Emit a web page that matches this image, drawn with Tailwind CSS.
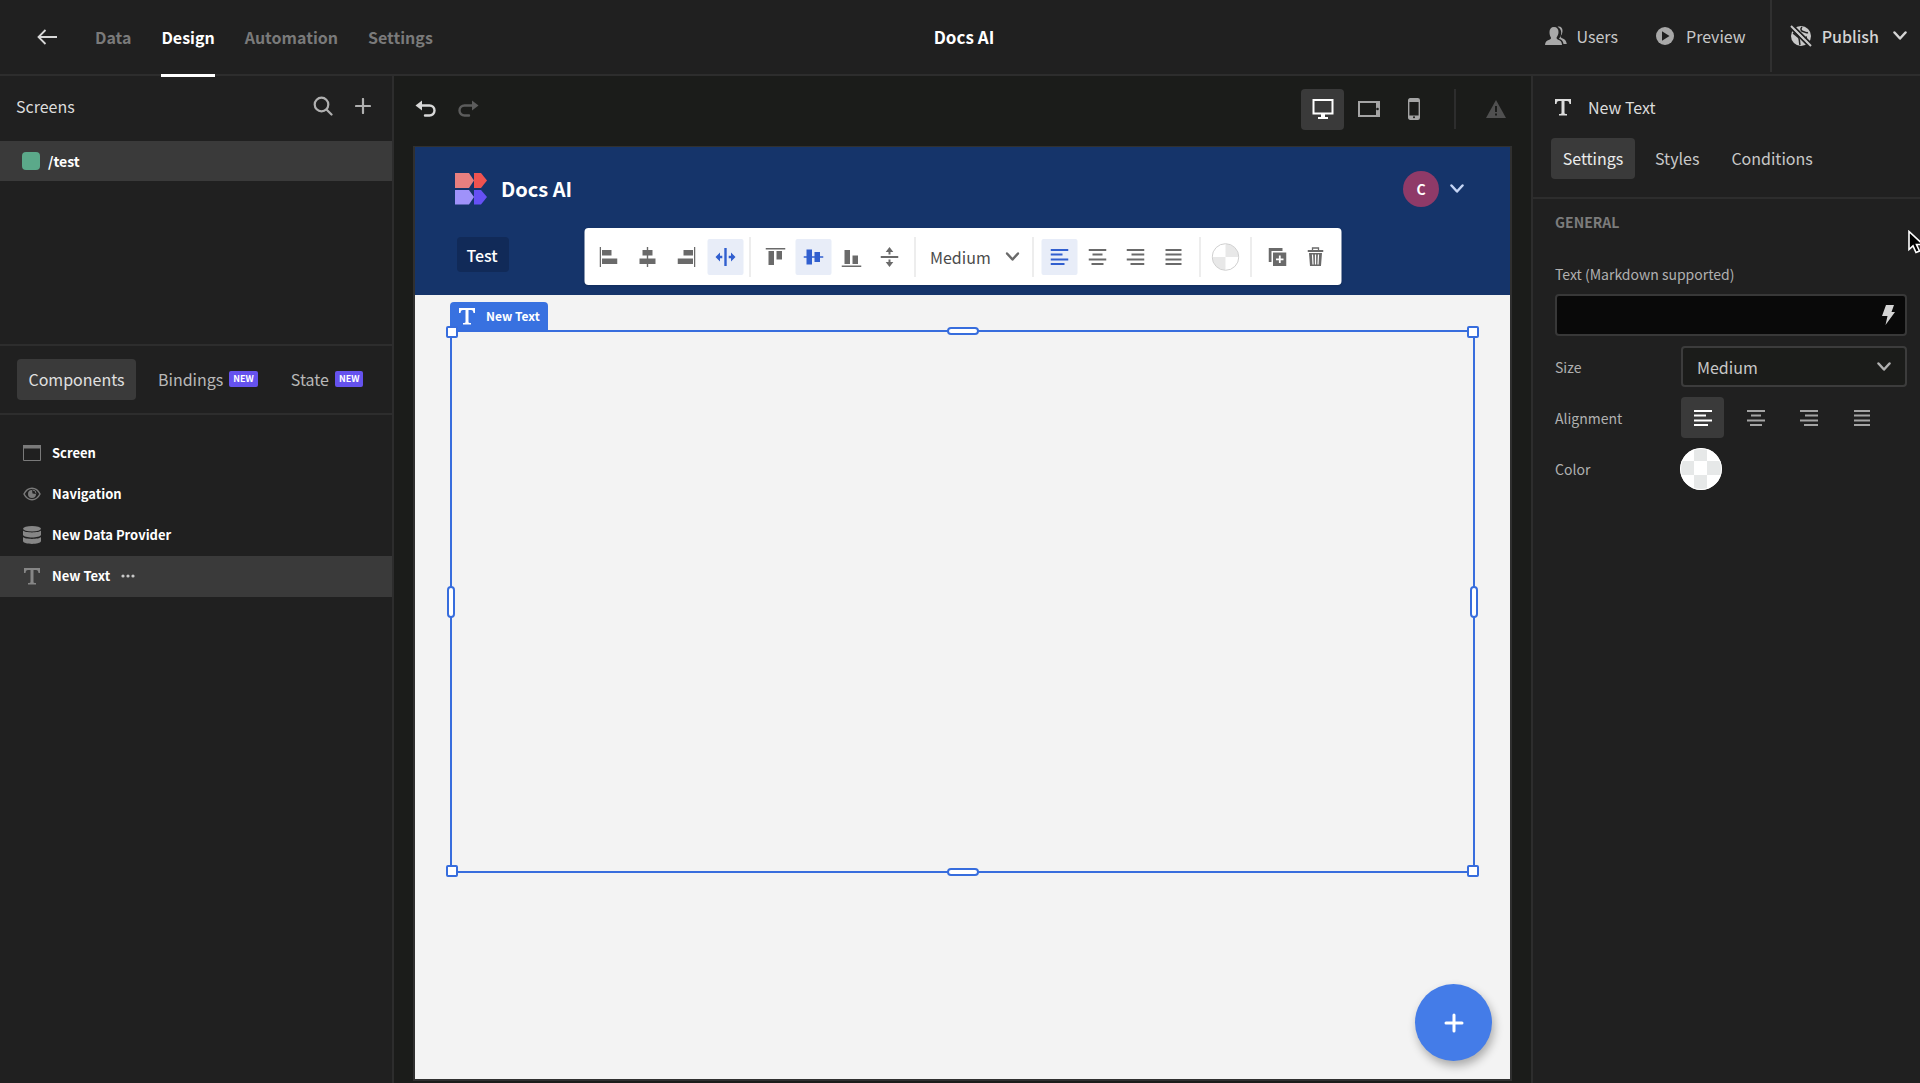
<!DOCTYPE html>
<html lang="en">
<head>
<meta charset="utf-8">
<meta name="viewport" content="width=device-width, initial-scale=1">
<title>Docs AI</title>
<script src="https://cdn.jsdelivr.net/npm/@tailwindcss/browser@4"></script>
</head>
<body class="flex min-h-screen flex-col overflow-x-hidden bg-[#202020] font-['Noto_Sans_CJK_SC','Noto_Sans',sans-serif] text-base leading-6 text-[#c8c8c8]">

<svg class="hidden" aria-hidden="true">
  <symbol id="chevron" viewBox="0 0 14 10"><path d="M1.5 1.5 7 7.5l5.500-6" fill="none" stroke="currentColor" stroke-width="2.500" stroke-linecap="round" stroke-linejoin="round"/></symbol>
  <symbol id="type" viewBox="0 0 18 18"><path d="M1 1h16v5h-1.500c-.2-2-.8-3-2.500-3h-2.500v12c0 .8.7 1 2.500 1v1.500h-8V16c1.800 0 2.500-.2 2.500-1V3H5C3.300 3 2.700 4 2.500 6H1z" fill="currentColor"/></symbol>
  <symbol id="undo" viewBox="0 0 22 18"><path d="M5 5.500h9.500a5 5 0 0 1 0 10H10" fill="none" stroke="currentColor" stroke-width="2.400" stroke-linecap="round"/><path d="M.5 5.500 7 .5v10z" fill="currentColor"/></symbol>
  <symbol id="al-left" viewBox="0 0 18 18"><path d="M0 2h18M0 6.500h12M0 11.500h18M0 16h14" stroke="currentColor" stroke-width="2.200"/></symbol>
  <symbol id="al-center" viewBox="0 0 18 18"><path d="M0 2h18M4 6.500h10M0 11.500h18M3 16h12" stroke="currentColor" stroke-width="2.200"/></symbol>
  <symbol id="al-right" viewBox="0 0 18 18"><path d="M0 2h18M5 6.500h13M0 11.500h18M4 16h14" stroke="currentColor" stroke-width="2.200"/></symbol>
  <symbol id="al-just" viewBox="0 0 18 18"><path d="M1 2h16M1 6.500h16M1 11.500h16M1 16h16" stroke="currentColor" stroke-width="2.200"/></symbol>
</svg>

<header class="grid h-[76px] shrink-0 grid-cols-[1fr_auto_1fr] items-center border-b-2 border-[#2d2d2d] pl-5 pr-3">
  <nav class="flex h-[74px] items-center gap-[30px] font-bold text-[#7a7a7a]">
    <button aria-label="Back" class="ml-[17px] mr-2 text-[#d8d8d8]">
      <svg class="h-4 w-5" viewBox="0 0 20 16"><path d="M20 8H2M8.500 1 1.500 8l7 7" fill="none" stroke="currentColor" stroke-width="1.800"/></svg>
    </button>
    <a href="#">Data</a>
    <a href="#" class="flex h-[77px] items-center self-start border-b-3 border-white text-white">Design</a>
    <a href="#">Automation</a>
    <a href="#">Settings</a>
  </nav>
  <h1 class="text-[17px] font-bold text-white">Docs AI</h1>
  <div class="flex h-[72px] items-center justify-end self-start">
    <button class="flex items-center gap-2.5">
      <svg class="h-5 w-[22px]" viewBox="0 0 22 20" fill="#a8a8a8"><path d="M9 1c3 0 4.500 2 4.500 5 0 2.500-1 4-1.800 5.200-.4 1.300.2 2 1.500 2.500 2.600.8 3.600 2 3.800 5.300H0c.2-3.300 1.500-4.500 4.300-5.300 1.500-.5 2-1.200 1.500-2.500C5 10 4.500 8.500 4.500 6c0-3 1.500-5 4.500-5z"/><path d="M12.500.8c3.200-.8 5 1.200 5 4.200 0 2.300-1 3.800-1.700 4.800-.4 1.200 0 2 1.300 2.500 2.400.8 4.200 2.200 4.700 5.700h-3.300c-.5-3-2-4.300-4.500-5.200 1.800-2.300 2.300-4.300 2.200-6.500C16 4 14.800 1.900 12.500.8z"/></svg>
      Users
    </button>
    <button class="ml-[38px] flex items-center gap-3">
      <svg class="size-[18px]" viewBox="0 0 18 18"><circle cx="9" cy="9" r="9" fill="#a8a8a8"/><path d="M6 4.300v9.400L13.500 9z" fill="#202020"/></svg>
      Preview
    </button>
    <div class="ml-6 h-full w-0.5 bg-[#303030]"></div>
    <button class="ml-[18px] flex items-center gap-2.5 font-medium text-[#d4d4d4]">
      <svg class="size-[22px]" viewBox="0 0 22 22"><circle cx="11" cy="11" r="10" fill="#c8c8c8"/><path d="M12 2c-2 2-1 4 1 4.500s3 2 5 1M3 8c2 1 3 3 5 4s1 4 2 8M17 12c-2 0-3 2-2 5" fill="none" stroke="#202020" stroke-width="1.500"/><path d="M0 2.500 19.500 22M2.500 0 22 19.500" stroke="#202020" stroke-width="2"/><path d="m1 1 20 20" stroke="#c8c8c8" stroke-width="2"/></svg>
      Publish
      <svg class="ml-1 mr-px h-2.5 w-3.5"><use href="#chevron"/></svg>
    </button>
  </div>
</header>

<div class="flex flex-1">
  <aside class="flex w-[394px] shrink-0 flex-col border-r-2 border-[#2d2d2d]">
    <section class="flex h-[270px] flex-col border-b-2 border-[#2d2d2d]">
      <div class="flex h-[65px] items-center gap-[22px] pb-1.5 pl-4 pr-[21px]">
        <h2 class="flex-1 text-[#dcdcdc]">Screens</h2>
        <button aria-label="Search screens"><svg class="size-5" viewBox="0 0 20 20" fill="none" stroke="#b0b0b0" stroke-width="2.200" stroke-linecap="round"><circle cx="8.500" cy="8.500" r="6.800"/><path d="m13.700 13.700 4.800 4.800"/></svg></button>
        <button aria-label="Add screen"><svg class="size-4" viewBox="0 0 16 16" stroke="#b0b0b0" stroke-width="2.200" stroke-linecap="round"><path d="M8 1v14M1 8h14"/></svg></button>
      </div>
      <a href="#" class="flex h-10 items-center gap-2 bg-[#3a3a3a] pl-[22px] text-sm font-bold text-white"><span class="size-[18px] rounded bg-[#5ba98a]"></span>/test</a>
    </section>

    <div class="flex h-[69px] items-center border-b-2 border-[#2d2d2d] pl-[17px] text-[#b8b8b8]">
      <button class="h-[41px] w-[119px] rounded bg-[#3a3a3a] pb-0.5 text-[#e0e0e0]">Components</button>
      <button class="ml-[22px] flex items-center gap-1.5 pb-0.5">Bindings <span class="rounded-xs bg-[#6552ee] px-1 text-[9px] font-bold leading-4 text-white">NEW</span></button>
      <button class="ml-[33px] flex items-center gap-1.5 pb-0.5">State <span class="rounded-xs bg-[#6552ee] px-1 text-[9px] font-bold leading-4 text-white">NEW</span></button>
    </div>

    <ul class="pt-[18px] text-[13px] font-bold text-white">
      <li class="flex h-[41px] items-center gap-[11px] pb-px pl-[23px]"><svg class="size-[18px]" viewBox="0 0 18 18"><path d="M.5 1.500h17v15H.5z" fill="none" stroke="#7a7a7a"/><path d="M0 1h18v3.500H0z" fill="#7a7a7a"/></svg>Screen</li>
      <li class="flex h-[41px] items-center gap-[11px] pb-px pl-[23px]"><svg class="size-[18px]" viewBox="0 0 18 18"><path d="M1 9c2-4 5-5.700 8-5.700S15 5 17 9c-2 4-5 5.700-8 5.700S3 13 1 9z" fill="none" stroke="#7a7a7a" stroke-width="1.500"/><path d="M9 5a4 4 0 1 0 4 4l-3.500-.5z" fill="#7a7a7a"/><path d="M9.500 5a3.500 3.500 0 0 1 3.500 3.500" fill="none" stroke="#7a7a7a"/></svg>Navigation</li>
      <li class="flex h-[41px] items-center gap-[11px] pb-px pl-[23px]"><svg class="size-[18px]" viewBox="0 0 18 18" fill="#868686"><ellipse cx="9" cy="2.800" rx="9" ry="2.800"/><path d="M0 4.500c2 2.500 16 2.500 18 0V9c-1 3.300-17 3.300-18 0zM0 11c2 2.500 16 2.500 18 0v4.300c-1 3.500-17 3.500-18 0z"/></svg>New Data Provider</li>
      <li class="flex h-[41px] items-center gap-[11px] bg-[#3a3a3a] pb-px pl-[23px]"><svg class="size-[18px] text-[#868686]"><use href="#type"/></svg>New Text
        <button aria-label="More actions"><svg class="h-1 w-3.5" viewBox="0 0 14 4" fill="#c8c8c8"><circle cx="2" cy="2" r="1.600"/><circle cx="7" cy="2" r="1.600"/><circle cx="12" cy="2" r="1.600"/></svg></button></li>
    </ul>
  </aside>

  <main class="flex min-w-0 flex-1 flex-col bg-[#1b1c1a] px-[19px] pb-0.5">
    <div class="flex h-[70px] shrink-0 items-center pb-1">
      <button aria-label="Undo" class="ml-0.5 text-[#d8d8d8]"><svg class="h-[18px] w-[22px]"><use href="#undo"/></svg></button>
      <button aria-label="Redo" class="ml-5 -scale-x-100 text-[#5c5c5c]"><svg class="h-[18px] w-[22px]"><use href="#undo"/></svg></button>
      <div class="ml-auto flex items-center text-[#a4a4a4]">
        <button aria-label="Desktop" class="flex h-[41px] w-[43px] items-center justify-center rounded bg-[#3a3a3a] text-white"><svg class="size-[22px]" viewBox="0 0 22 22"><path d="M1.500 2h19v13.500h-19z" fill="none" stroke="currentColor" stroke-width="2"/><path d="M9 16h4v3h3v2H6v-2h3z" fill="currentColor"/></svg></button>
        <button aria-label="Tablet" class="ml-[14px]"><svg class="h-[18px] w-[22px]" viewBox="0 0 22 18"><path d="M1 2h20v14H1z" fill="none" stroke="currentColor" stroke-width="2"/><path d="M18 1h3v16h-3z" fill="currentColor"/><circle cx="19.500" cy="9" r="1.300" fill="#1b1c1a"/></svg></button>
        <button aria-label="Mobile" class="ml-7"><svg class="h-[22px] w-3" viewBox="0 0 12 22"><rect x=".7" y=".7" width="10.600" height="20.600" rx="1.500" fill="none" stroke="currentColor" stroke-width="1.400"/><path d="M1 1h10v3H1zM1 17.500h10V21H1z" fill="currentColor"/><circle cx="6" cy="19.200" r="1" fill="#1b1c1a"/></svg></button>
        <div class="ml-[34px] h-10 w-0.5 bg-[#2d2d2d]"></div>
        <svg class="ml-[30px] mr-1.5 h-[18px] w-5" viewBox="0 0 20 18" role="img" aria-label="Warnings"><path d="M10 0l10 18H0z" fill="#505050"/><path d="M10 6v6M10 13.500v2" stroke="#1b1c1a" stroke-width="2"/></svg>
      </div>
    </div>

    <div class="relative flex flex-1 flex-col border-2 border-t-[1px] border-[#303030] bg-[#f3f3f3]">
      <div class="flex h-[148px] shrink-0 flex-col bg-[#15346a] px-10 text-white">
        <div class="flex h-[84px] items-center">
          <svg class="size-8" viewBox="0 0 32 32"><path d="M0 0h14l5 7.500-5 7.500H0z" fill="#e87f7f"/><path d="M19 0h7l6 7.500-6 7.500h-7z" fill="#ef5350"/><path d="M0 17h14l5 7-5 7.500H0z" fill="#9f92fa"/><path d="M19 17h7l6 7-6 7.500h-7z" fill="#6650f5"/></svg>
          <span class="ml-[14px] text-xl font-bold">Docs AI</span>
          <button aria-label="Account" class="ml-auto mr-1.5 flex items-center gap-[11px]"><span class="size-9 rounded-full bg-[#8f3a68] text-sm font-bold leading-9">C</span><svg class="h-2.5 w-3.5 text-[#c5d5f5]"><use href="#chevron"/></svg></button>
        </div>
        <a href="#" class="ml-0.5 mt-1.5 flex h-[35px] w-[52px] items-center justify-center rounded bg-[#112a58] pr-0.5 font-medium">Test</a>
      </div>

      <!-- Floating formatting toolbar -->
      <div class="absolute left-1/2 top-[81px] flex h-[57px] -translate-x-1/2 items-center rounded bg-white text-[#6a6a6a] shadow-sm">
        <div class="flex gap-[3px] px-1.5">
          <button aria-label="Align left edge" class="flex size-9 items-center justify-center"><svg class="h-5 w-[18px]" viewBox="0 0 18 20" fill="currentColor"><path d="M0 0h1.500v20H0zM2.500 3H12v5.500H2.500zM2.500 11.500H18V17H2.500z"/></svg></button>
          <button aria-label="Align center" class="flex size-9 items-center justify-center"><svg class="h-5 w-[18px]" viewBox="0 0 18 20" fill="currentColor"><path d="M8.300 0h1.400v20H8.300zM4 3h10v5.500H4zM1 11.500h16V17H1z"/></svg></button>
          <button aria-label="Align right edge" class="flex size-9 items-center justify-center"><svg class="h-5 w-[18px]" viewBox="0 0 18 20" fill="currentColor"><path d="M16.500 0H18v20h-1.500zM6 3h9.500v5.500H6zM0 11.500h15.500V17H0z"/></svg></button>
          <button aria-label="Stretch horizontally" class="flex size-9 items-center justify-center rounded-xs bg-[#e8edf8] text-[#315fcf]"><svg class="h-5 w-[22px]" viewBox="0 0 22 20" fill="currentColor"><path d="M9.800 1h2.400v18H9.800zM7.800 8.800H5.500V5.500L1 10l4.500 4.500v-3.300h2.300zM14.200 8.800h2.300V5.500L21 10l-4.500 4.500v-3.300h-2.300z"/></svg></button>
        </div>
        <div class="h-10 w-px bg-[#dcdcdc]"></div>
        <div class="flex gap-0.5 px-[7px]">
          <button aria-label="Align top" class="flex size-9 items-center justify-center"><svg class="h-5 w-5" viewBox="0 0 20 20" fill="currentColor"><path d="M0 1h20v1.500H0zM3 4h5.500v14H3zM11 4h5.500v8.500H11z"/></svg></button>
          <button aria-label="Align middle" class="flex size-9 items-center justify-center rounded-xs bg-[#e8edf8] text-[#315fcf]"><svg class="h-5 w-5" viewBox="0 0 20 20" fill="currentColor"><path d="M0 9.300h20v1.400H0zM3 2.500h5.500v15H3zM11 5h5.500v10H11z"/></svg></button>
          <button aria-label="Align bottom" class="flex size-9 items-center justify-center"><svg class="h-5 w-5" viewBox="0 0 20 20" fill="currentColor"><path d="M0 18.500h20V20H0zM3 3h5.500v14H3zM11 8.500h5.500V17H11z"/></svg></button>
          <button aria-label="Stretch vertically" class="flex size-9 items-center justify-center"><svg class="h-5 w-[18px]" viewBox="0 0 18 20" fill="currentColor"><path d="M0 9h18v2H0zM8 7.500V5H5.200L9 0l3.800 5H10v2.500zM8 12.500V15H5.200L9 20l3.800-5H10v-2.500z"/></svg></button>
        </div>
        <div class="h-10 w-px bg-[#dcdcdc]"></div>
        <div class="relative">
          <select aria-label="Text size" class="h-9 w-[117px] appearance-none pl-[15px] text-[#4b4b4b]"><option>Medium</option></select>
          <svg class="pointer-events-none absolute right-[13px] top-[13px] h-2.5 w-3.5"><use href="#chevron"/></svg>
        </div>
        <div class="h-10 w-px bg-[#dcdcdc]"></div>
        <div class="flex gap-0.5 px-2">
          <button aria-label="Text left" class="flex size-9 items-center justify-center rounded-xs bg-[#e8edf8] text-[#315fcf]"><svg class="size-[18px]"><use href="#al-left"/></svg></button>
          <button aria-label="Text center" class="flex size-9 items-center justify-center"><svg class="size-[18px]"><use href="#al-center"/></svg></button>
          <button aria-label="Text right" class="flex size-9 items-center justify-center"><svg class="size-[18px]"><use href="#al-right"/></svg></button>
          <button aria-label="Justify text" class="flex size-9 items-center justify-center"><svg class="size-[18px]"><use href="#al-just"/></svg></button>
        </div>
        <div class="h-10 w-px bg-[#dcdcdc]"></div>
        <button aria-label="Text color" class="mx-[11px]"><svg class="size-7" viewBox="0 0 28 28"><circle cx="14" cy="14" r="13.500" fill="#fff"/><path d="M14 1a13 13 0 0 1 13 13H14zM14 27A13 13 0 0 1 1 14h13z" fill="#e8e8e8"/><circle cx="14" cy="14" r="13.300" fill="none" stroke="#cfcfcf"/></svg></button>
        <div class="h-10 w-px bg-[#dcdcdc]"></div>
        <div class="flex gap-0.5 px-2">
          <button aria-label="Duplicate" class="flex size-9 items-center justify-center"><svg class="h-5 w-[18px]" viewBox="0 0 18 20"><path d="M0 1h14v3H3v11H0z" fill="currentColor"/><path d="M4.500 5.500H18V19H4.500z" fill="currentColor"/><path d="M11.300 8.500v7.500M7.500 12.300H15" stroke="#fff" stroke-width="1.800"/></svg></button>
          <button aria-label="Delete" class="flex size-9 items-center justify-center"><svg class="h-5 w-4" viewBox="0 0 16 20"><path d="M0 3h16v2H0zM1.500 6h13l-1 13h-11z" fill="currentColor"/><path d="M5 3V1h6v2" fill="none" stroke="currentColor" stroke-width="1.300"/><path d="M5 7.500l.5 10M8 7.500v10M11 7.500l-.5 10" stroke="#fff" stroke-width="1.200"/></svg></button>
        </div>
      </div>

      <!-- Selected component outline with resize handles -->
      <div class="relative mx-[35px] mt-[35px] h-[543px] border-2 border-[#376ddd]">
        <div class="absolute -left-0.5 -top-[30px] flex h-7 items-center gap-[10px] rounded-t bg-[#3871e0] px-2 text-xs font-bold text-white"><svg class="size-[18px]"><use href="#type"/></svg>New Text</div>
        <span class="absolute -left-1.5 -top-1.5 size-3 rounded-xs border-2 border-[#376ddd] bg-white"></span>
        <span class="absolute -right-1.5 -top-1.5 size-3 rounded-xs border-2 border-[#376ddd] bg-white"></span>
        <span class="absolute -bottom-1.5 -left-1.5 size-3 rounded-xs border-2 border-[#376ddd] bg-white"></span>
        <span class="absolute -bottom-1.5 -right-1.5 size-3 rounded-xs border-2 border-[#376ddd] bg-white"></span>
        <span class="absolute -top-[5px] left-1/2 h-2 w-8 -translate-x-1/2 rounded-sm border-2 border-[#376ddd] bg-white"></span>
        <span class="absolute -bottom-[5px] left-1/2 h-2 w-8 -translate-x-1/2 rounded-sm border-2 border-[#376ddd] bg-white"></span>
        <span class="absolute -left-[5px] top-1/2 h-8 w-2 -translate-y-1/2 rounded-sm border-2 border-[#376ddd] bg-white"></span>
        <span class="absolute -right-[5px] top-1/2 h-8 w-2 -translate-y-1/2 rounded-sm border-2 border-[#376ddd] bg-white"></span>
      </div>

      <button aria-label="Add component" class="absolute bottom-[18px] right-[18px] flex size-[77px] items-center justify-center rounded-full bg-[#447ce8] shadow-[2px_5px_10px_rgba(0,0,0,0.3)]"><svg class="size-5" viewBox="0 0 20 20" stroke="#fff" stroke-width="3" stroke-linecap="round"><path d="M10 2v16M2 10h16"/></svg></button>
    </div>
  </main>

  <aside class="w-[389px] shrink-0 border-l-2 border-[#2d2d2d]">
    <div class="flex h-[62px] items-center gap-4 pl-[21px] text-[#dcdcdc]"><svg class="size-[18px]"><use href="#type"/></svg><h2>New Text</h2></div>
    <div class="flex h-[61px] items-start border-b-2 border-[#2d2d2d] pl-[18px]">
      <button class="h-[41px] w-[84px] rounded bg-[#3a3a3a] pb-0.5 text-[#ececec]">Settings</button>
      <button class="ml-5 h-[41px] pb-0.5">Styles</button>
      <button class="ml-8 h-[41px] pb-0.5">Conditions</button>
    </div>
    <form class="pl-[22px] pr-[13px] pt-[13px] text-sm text-[#b0b0b0]">
      <h3 class="font-bold text-[#7c7c7c]">GENERAL</h3>
      <label for="text" class="mb-2.5 mt-8 block">Text (Markdown supported)</label>
      <div class="relative">
        <input id="text" type="text" class="block h-[42px] w-full rounded border-2 border-[#383838] bg-[#090909] px-4 text-white">
        <svg class="absolute right-3 top-[11px] h-5 w-[13px]" viewBox="0 0 13 20"><path d="M4 0h8L9.500 7H13L3.500 20 5.500 11H0z" fill="#d4d4d4"/></svg>
      </div>
      <div class="mt-2.5 flex items-center">
        <label for="size" class="w-[126px]">Size</label>
        <div class="relative flex-1">
          <select id="size" class="block h-[41px] w-full appearance-none rounded border-2 border-[#3c3c3c] bg-[#1b1c1a] pl-[14px] text-base text-[#c8c8c8]"><option>Medium</option></select>
          <svg class="pointer-events-none absolute right-4 top-4 h-2.5 w-3.5"><use href="#chevron"/></svg>
        </div>
      </div>
      <div class="mt-2.5 flex items-center">
        <span class="w-[126px]">Alignment</span>
        <div class="flex gap-[10px] text-[#a4a4a4]">
          <button type="button" aria-label="Left" class="flex h-[41px] w-[43px] items-center justify-center rounded bg-[#3a3a3a] text-white"><svg class="size-[18px]"><use href="#al-left"/></svg></button>
          <button type="button" aria-label="Center" class="flex h-[41px] w-[43px] items-center justify-center"><svg class="size-[18px]"><use href="#al-center"/></svg></button>
          <button type="button" aria-label="Right" class="flex h-[41px] w-[43px] items-center justify-center"><svg class="size-[18px]"><use href="#al-right"/></svg></button>
          <button type="button" aria-label="Justify" class="flex h-[41px] w-[43px] items-center justify-center"><svg class="size-[18px]"><use href="#al-just"/></svg></button>
        </div>
      </div>
      <div class="mt-2.5 flex items-center">
        <span class="w-[125px]">Color</span>
        <button type="button" aria-label="Pick color" class="size-[42px] overflow-hidden rounded-full"><svg class="size-full" viewBox="0 0 42 42"><path fill="#fff" d="M0 0h42v42H0z"/><path fill="#e6e8e8" d="M14 1h13v12H14zM1 13h13v14H1zM27 13h14v14H27zM14 27h13v14H14z"/><circle cx="21" cy="21" r="20.500" fill="none" stroke="#fff"/></svg></button>
      </div>
    </form>
  </aside>
</div>

<!-- Mouse pointer -->
<svg class="pointer-events-none absolute right-0 top-[230px] h-6 w-3" viewBox="0 0 12 24"><path d="M1 1.500v18l4-3.700 3 6.700 3.500-1.500-3-6.500H15z" fill="#000" stroke="#fff" stroke-width="1.600"/></svg>
</body>
</html>
